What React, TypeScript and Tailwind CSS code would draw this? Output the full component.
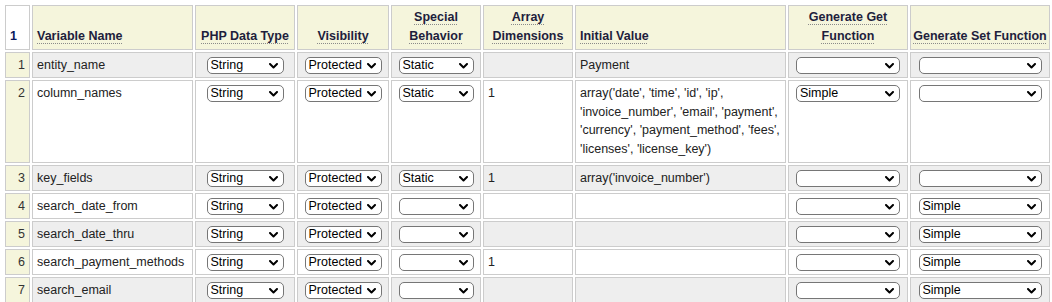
import React from "react";

type Row = {
  n: number;
  name: string;
  type: string;
  vis: string;
  special: string;
  dims: string;
  init: string[];
  get: string;
  set: string;
};

const rows: Row[] = [
  { n: 1, name: "entity_name", type: "String", vis: "Protected", special: "Static", dims: "", init: ["Payment"], get: "", set: "" },
  {
    n: 2,
    name: "column_names",
    type: "String",
    vis: "Protected",
    special: "Static",
    dims: "1",
    init: [
      "array('date', 'time', 'id', 'ip',",
      "'invoice_number', 'email', 'payment',",
      "'currency', 'payment_method', 'fees',",
      "'licenses', 'license_key')",
    ],
    get: "Simple",
    set: "",
  },
  { n: 3, name: "key_fields", type: "String", vis: "Protected", special: "Static", dims: "1", init: ["array('invoice_number')"], get: "", set: "" },
  { n: 4, name: "search_date_from", type: "String", vis: "Protected", special: "", dims: "", init: [], get: "", set: "Simple" },
  { n: 5, name: "search_date_thru", type: "String", vis: "Protected", special: "", dims: "", init: [], get: "", set: "Simple" },
  { n: 6, name: "search_payment_methods", type: "String", vis: "Protected", special: "", dims: "1", init: [], get: "", set: "Simple" },
  { n: 7, name: "search_email", type: "String", vis: "Protected", special: "", dims: "", init: [], get: "", set: "Simple" },
];

function Chevron() {
  return (
    <svg width="9" height="6" viewBox="0 0 9 6" className="shrink-0">
      <path d="M1 1 L4.5 4.5 L8 1" fill="none" stroke="#000" strokeWidth="2" strokeLinecap="round" strokeLinejoin="round" />
    </svg>
  );
}

function FakeSelect({ value, widthClass }: { value: string; widthClass: string }) {
  return (
    <div
      className={`mx-auto flex h-[17px] items-center justify-between rounded-[5px] border border-[#767676] bg-white pl-[3px] pr-[5px] text-[12.5px] leading-none text-black ${widthClass}`}
    >
      <span className="whitespace-nowrap">{value}</span>
      <Chevron />
    </div>
  );
}

function HeadLabel({ children }: { children: React.ReactNode }) {
  return (
    <span className="underline decoration-dotted decoration-[#8a8a8a] decoration-[1px] underline-offset-[3px]">
      {children}
    </span>
  );
}

export default function App() {
  const th =
    "border border-[#cccccc] bg-[#f5f5dc] align-bottom font-bold leading-[19px] pb-[3px] text-[#1e1e3c]";
  const td = "border border-[#cccccc] align-top";
  return (
    <div className="bg-white pl-[3px] pt-[3px] font-['Liberation_Sans',Arial,sans-serif] text-[12.5px] text-[#222222]">
      <table className="w-[1049px] table-fixed border-separate border-spacing-[2px]">
        <thead>
          <tr className="h-[45px]">
            <th className="w-[25px] border border-[#cccccc] bg-white px-[4px] pb-[3px] text-left align-bottom font-bold leading-[19px] text-[#0a1a5c]">
              1
            </th>
            <th className={`w-[161px] px-[4px] text-left ${th}`}>
              <HeadLabel>Variable Name</HeadLabel>
            </th>
            <th className={`w-[100px] px-[2px] text-center ${th}`}>
              <HeadLabel>PHP Data Type</HeadLabel>
            </th>
            <th className={`w-[92px] px-[2px] text-center ${th}`}>
              <HeadLabel>Visibility</HeadLabel>
            </th>
            <th className={`w-[90px] px-[2px] text-center ${th}`}>
              <HeadLabel>
                Special
                <br />
                Behavior
              </HeadLabel>
            </th>
            <th className={`w-[90px] px-[2px] text-center ${th}`}>
              <HeadLabel>
                Array
                <br />
                Dimensions
              </HeadLabel>
            </th>
            <th className={`w-[211px] px-[4px] text-left ${th}`}>
              <HeadLabel>Initial Value</HeadLabel>
            </th>
            <th className={`w-[120px] px-[2px] text-center ${th}`}>
              <HeadLabel>
                Generate Get
                <br />
                Function
              </HeadLabel>
            </th>
            <th className={`w-[140px] whitespace-nowrap px-0 text-center ${th}`}>
              <HeadLabel>Generate Set Function</HeadLabel>
            </th>
          </tr>
        </thead>
        <tbody>
          {rows.map((r) => {
            const bg = r.n % 2 === 1 ? "bg-[#eeeeee]" : "bg-white";
            const rowH = r.n === 2 ? "h-[83px]" : "h-[26px]";
            return (
              <tr key={r.n} className={rowH}>
                <td className={`${td} bg-[#f5f5dc] pr-[4px] pt-[3px] text-right leading-[18px] text-[#333333]`}>{r.n}</td>
                <td className={`${td} ${bg} whitespace-nowrap px-[4px] pt-[3px] leading-[18px]`}>{r.name}</td>
                <td className={`${td} ${bg} pt-[4px]`}>
                  <FakeSelect value={r.type} widthClass="w-[77px]" />
                </td>
                <td className={`${td} ${bg} pt-[4px]`}>
                  <FakeSelect value={r.vis} widthClass="w-[77px]" />
                </td>
                <td className={`${td} ${bg} pt-[4px]`}>
                  <FakeSelect value={r.special} widthClass="w-[75px]" />
                </td>
                <td className={`${td} ${bg} px-[4px] pt-[3px] leading-[18px]`}>{r.dims}</td>
                <td className={`${td} ${bg} px-[4px] pt-[3px] leading-[18.5px]`}>
                  {r.init.map((l, i) => (
                    <div key={i} className="whitespace-nowrap">
                      {l}
                    </div>
                  ))}
                </td>
                <td className={`${td} ${bg} pt-[4px]`}>
                  <FakeSelect value={r.get} widthClass="w-[104px]" />
                </td>
                <td className={`${td} ${bg} pt-[4px]`}>
                  <FakeSelect value={r.set} widthClass="w-[123px]" />
                </td>
              </tr>
            );
          })}
        </tbody>
      </table>
    </div>
  );
}
